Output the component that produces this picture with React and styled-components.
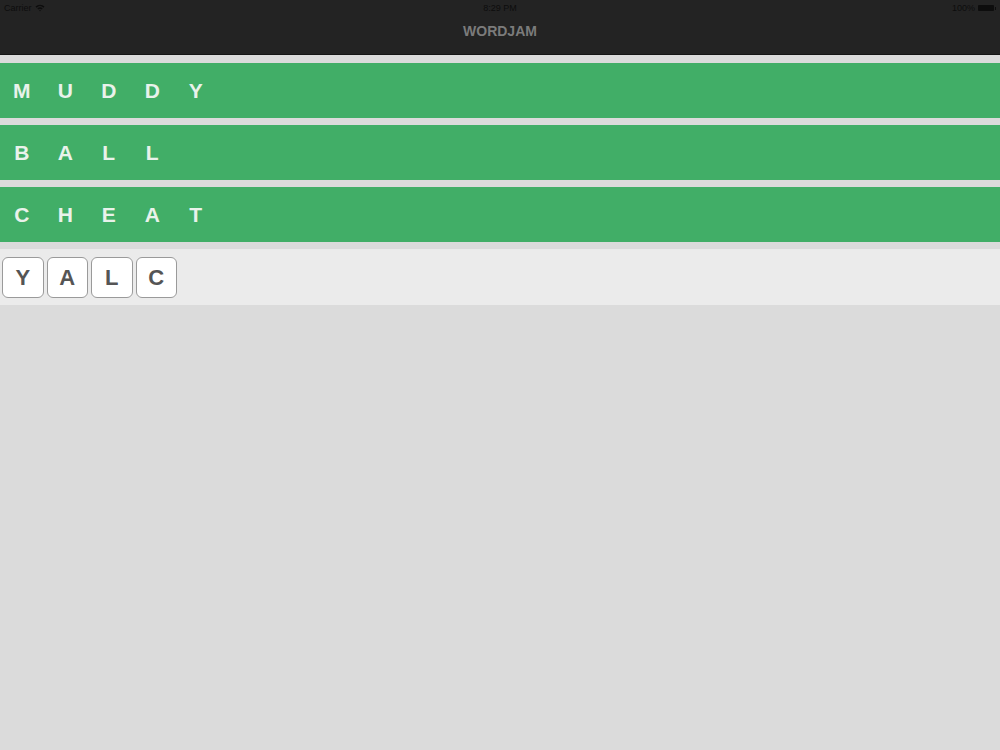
import styled, { createGlobalStyle } from "styled-components";

const GlobalStyle = createGlobalStyle`
  html, body {
    margin: 0;
    padding: 0;
    background: #dbdbdb;
    font-family: "Liberation Sans", Arial, sans-serif;
  }
`

const Screen = styled.div`
  width: 1000px;
  height: 750px;
  background: #dbdbdb;
  display: flex;
  flex-direction: column;
  overflow: hidden;
`

const Header = styled.div`
  height: 54px;
  background: #232323;
  border-bottom: 1px solid #151515;
  display: flex;
  flex-direction: column;
`

const StatusBar = styled.div`
  height: 15px;
  display: flex;
  align-items: center;
  justify-content: space-between;
  padding: 0 4px;
  font-size: 9px;
  color: #0d0d0d;
`

const StatusSide = styled.div`
  flex: 1;
  display: flex;
  align-items: center;
  gap: 3px;
  justify-content: ${p => p.$end ? "flex-end" : "flex-start"};
`

const Battery = styled.div`
  width: 16px;
  height: 6px;
  background: #0d0d0d;
  border-radius: 1px;
  position: relative;
  margin-right: 2px;
  &::after {
    content: "";
    position: absolute;
    right: -2px;
    top: 2px;
    width: 1px;
    height: 3px;
    background: #0d0d0d;
  }
`

const Title = styled.div`
  flex: 1;
  display: flex;
  align-items: center;
  justify-content: center;
  padding-bottom: 8px;
  font-size: 14px;
  font-weight: bold;
  color: #7b7b7b;
`

const Board = styled.div`
  display: flex;
  flex-direction: column;
  gap: 7px;
  padding-top: 8px;
`

const WordRow = styled.div`
  height: 55px;
  background: #41ae67;
  display: flex;
  align-items: center;
`

const Letter = styled.div`
  width: 43.5px;
  text-align: center;
  font-size: 21px;
  font-weight: bold;
  color: #e9f2eb;
`

const TileTray = styled.div`
  height: 56px;
  background: #ebebeb;
  display: flex;
  align-items: flex-start;
  gap: 3px;
  padding: 8px 2px 0;
  box-sizing: border-box;
`

const Tile = styled.div`
  width: 41.5px;
  height: 41px;
  box-sizing: border-box;
  background: #fff;
  border: 1px solid #9a9a9a;
  border-radius: 6px;
  display: flex;
  align-items: center;
  justify-content: center;
  font-size: 22px;
  font-weight: bold;
  color: #555;
`

const Wifi = () => (
  <svg width="10" height="8" viewBox="0 0 10 8">
    <path d="M0.5 2.6 A6.5 6.5 0 0 1 9.5 2.6 L8.4 3.7 A5 5 0 0 0 1.6 3.7 Z" fill="#0d0d0d" />
    <path d="M2.3 4.4 A4 4 0 0 1 7.7 4.4 L6.6 5.5 A2.5 2.5 0 0 0 3.4 5.5 Z" fill="#0d0d0d" />
    <path d="M4.1 6.2 A1.4 1.4 0 0 1 5.9 6.2 L5 7.3 Z" fill="#0d0d0d" />
  </svg>
)

const words = ["MUDDY", "BALL", "CHEAT"]
const tiles = ["Y", "A", "L", "C"]

export default function App() {
  return (
    <Screen>
      <GlobalStyle />
      <Header>
        <StatusBar>
          <StatusSide>Carrier <Wifi /></StatusSide>
          <span>8:29 PM</span>
          <StatusSide $end>100% <Battery /></StatusSide>
        </StatusBar>
        <Title>WORDJAM</Title>
      </Header>
      <Board>
        {words.map(w => (
          <WordRow key={w}>
            {w.split("").map((c, i) => <Letter key={i}>{c}</Letter>)}
          </WordRow>
        ))}
        <TileTray>
          {tiles.map(t => <Tile key={t}>{t}</Tile>)}
        </TileTray>
      </Board>
    </Screen>
  );
}
